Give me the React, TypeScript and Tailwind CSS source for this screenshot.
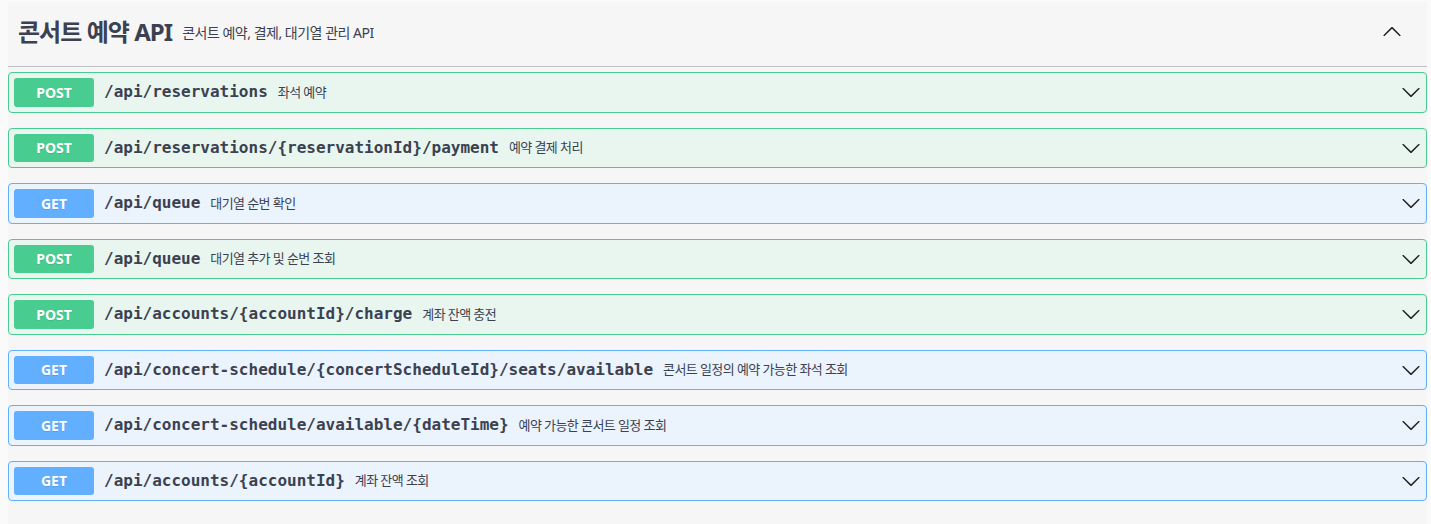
import React from 'react';

type Method = 'GET' | 'POST';

interface Op {
  method: Method;
  path: string;
  summary: string;
}

const ops: Op[] = [
  { method: 'POST', path: '/api/reservations', summary: '좌석 예약' },
  { method: 'POST', path: '/api/reservations/{reservationId}/payment', summary: '예약 결제 처리' },
  { method: 'GET', path: '/api/queue', summary: '대기열 순번 확인' },
  { method: 'POST', path: '/api/queue', summary: '대기열 추가 및 순번 조회' },
  { method: 'POST', path: '/api/accounts/{accountId}/charge', summary: '계좌 잔액 충전' },
  {
    method: 'GET',
    path: '/api/concert-schedule/{concertScheduleId}/seats/available',
    summary: '콘서트 일정의 예약 가능한 좌석 조회',
  },
  { method: 'GET', path: '/api/concert-schedule/available/{dateTime}', summary: '예약 가능한 콘서트 일정 조회' },
  { method: 'GET', path: '/api/accounts/{accountId}', summary: '계좌 잔액 조회' },
];

const sans = "font-['Noto_Sans','Noto_Sans_CJK_KR',sans-serif]";

const Arrow = ({ up }: { up?: boolean }) => (
  <svg
    width="20"
    height="20"
    viewBox="0 0 20 20"
    className={up ? 'rotate-180' : ''}
    fill="#222"
    aria-hidden="true">
    <path d="M17.418 6.109c.272-.268.709-.268.979 0s.271.701 0 .969l-7.908 7.83c-.27.268-.707.268-.979 0l-7.908-7.83c-.27-.268-.27-.701 0-.969.271-.268.709-.268.979 0L10 13.25l7.418-7.141z" />
  </svg>
);

const OpBlock = ({ method, path, summary }: Op) => {
  const isGet = method === 'GET';
  return (
    <div
      className={`mb-[15px] rounded-[4px] border ${
        isGet ? 'border-[#61affe] bg-[#ebf3fc]' : 'border-[#49cc90] bg-[#e8f6ef]'
      }`}>
      <div className="flex h-[38.5px] items-center px-[5px]">
        <span
          className={`flex h-[28.5px] w-[80px] shrink-0 items-center justify-center rounded-[3px] text-[14px] font-bold text-white [text-shadow:0_1px_0_rgba(0,0,0,0.1)] ${sans} ${
            isGet ? 'bg-[#61affe]' : 'bg-[#49cc90]'
          }`}>
          {method}
        </span>
        <span className="pl-[10px] font-['DejaVu_Sans_Mono',monospace] text-[16px] font-bold text-[#3b4151]">
          {path}
        </span>
        <span className={`pl-[10px] text-[13px] tracking-[-0.045em] text-[#3b4151] ${sans}`}>{summary}</span>
        <span className="ml-auto flex items-center">
          <Arrow />
        </span>
      </div>
    </div>
  );
};

export default function App() {
  return (
    <div className="min-h-[524px] bg-[#fafafa] pl-[8px] pr-[4px] pt-[2px]">
      <div className="min-h-[522px] bg-[#f6f6f6]">
        <div className="mb-[5px] flex h-[65px] items-center border-b border-[#3b4151]/30 pb-[4px] pl-[10px] pr-[25px]">
          <span className={`text-[24px] font-bold tracking-[-0.04em] text-[#3b4151] ${sans}`}>콘서트 예약 API</span>
          <span className={`pl-[10px] text-[14px] tracking-[-0.035em] text-[#3b4151] ${sans}`}>
            콘서트 예약, 결제, 대기열 관리 API
          </span>
          <span className="ml-auto flex items-center">
            <Arrow up />
          </span>
        </div>
        {ops.map((op) => (
          <OpBlock key={op.method + op.path} {...op} />
        ))}
      </div>
    </div>
  );
}
